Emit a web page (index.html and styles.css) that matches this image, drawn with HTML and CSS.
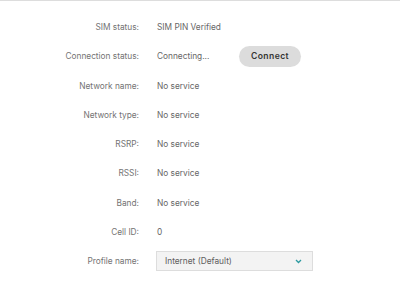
FILE: index.html
```html
<!DOCTYPE html>
<html lang="en">
<head>
  <meta charset="UTF-8">
  <title>Mobile network status</title>
  <link rel="stylesheet" href="styles.css">
</head>
<body>
  <div class="panel">
    <div class="row">
      <span class="label">SIM status:</span>
      <span class="value">SIM PIN Verified</span>
    </div>
    <div class="row">
      <span class="label">Connection status:</span>
      <span class="value">
        <span class="status-text">Connecting...</span>
        <button class="connect-btn">Connect</button>
      </span>
    </div>
    <div class="row">
      <span class="label">Network name:</span>
      <span class="value">No service</span>
    </div>
    <div class="row">
      <span class="label">Network type:</span>
      <span class="value">No service</span>
    </div>
    <div class="row">
      <span class="label">RSRP:</span>
      <span class="value">No service</span>
    </div>
    <div class="row">
      <span class="label">RSSI:</span>
      <span class="value">No service</span>
    </div>
    <div class="row">
      <span class="label">Band:</span>
      <span class="value">No service</span>
    </div>
    <div class="row">
      <span class="label">Cell ID:</span>
      <span class="value">0</span>
    </div>
    <div class="row">
      <span class="label">Profile name:</span>
      <span class="value">
        <span class="select">
          Internet (Default)
          <svg class="chevron" width="7" height="5" viewBox="0 0 7 5">
            <path d="M1 1 L3.5 3.5 L6 1" fill="none" stroke="#2b9aa0" stroke-width="1.3"/>
          </svg>
        </span>
      </span>
    </div>
  </div>
</body>
</html>
```

FILE: styles.css
```css
body {
  margin: 0;
  background: #ffffff;
  font-family: Inter, "Noto Sans", sans-serif;
  font-size: 8.3px;
  color: #707070;
}

.panel {
  border-top: 1px solid #dddddd;
  padding-top: 11.5px;
}

.row {
  display: grid;
  grid-template-columns: 139px auto;
  column-gap: 18px;
  align-items: center;
  height: 29.25px;
}

.label {
  text-align: right;
  color: #737373;
}

.value {
  display: flex;
  align-items: center;
  color: #666666;
}

.status-text {
  width: 82px;
}

.connect-btn {
  width: 62px;
  height: 21px;
  border: none;
  border-radius: 11px;
  background-color: #dcdcdc;
  color: #333333;
  font-family: Inter, "Noto Sans", sans-serif;
  font-size: 8.6px;
  font-weight: 600;
  letter-spacing: 0.4px;
  padding: 0;
}

.select {
  display: flex;
  align-items: center;
  justify-content: space-between;
  box-sizing: border-box;
  width: 157px;
  height: 20px;
  margin-left: -1px;
  padding: 0 10px 0 8px;
  background-color: #f3f3f3;
  border: 1px solid #dddddd;
  color: #5e5e5e;
}
```
